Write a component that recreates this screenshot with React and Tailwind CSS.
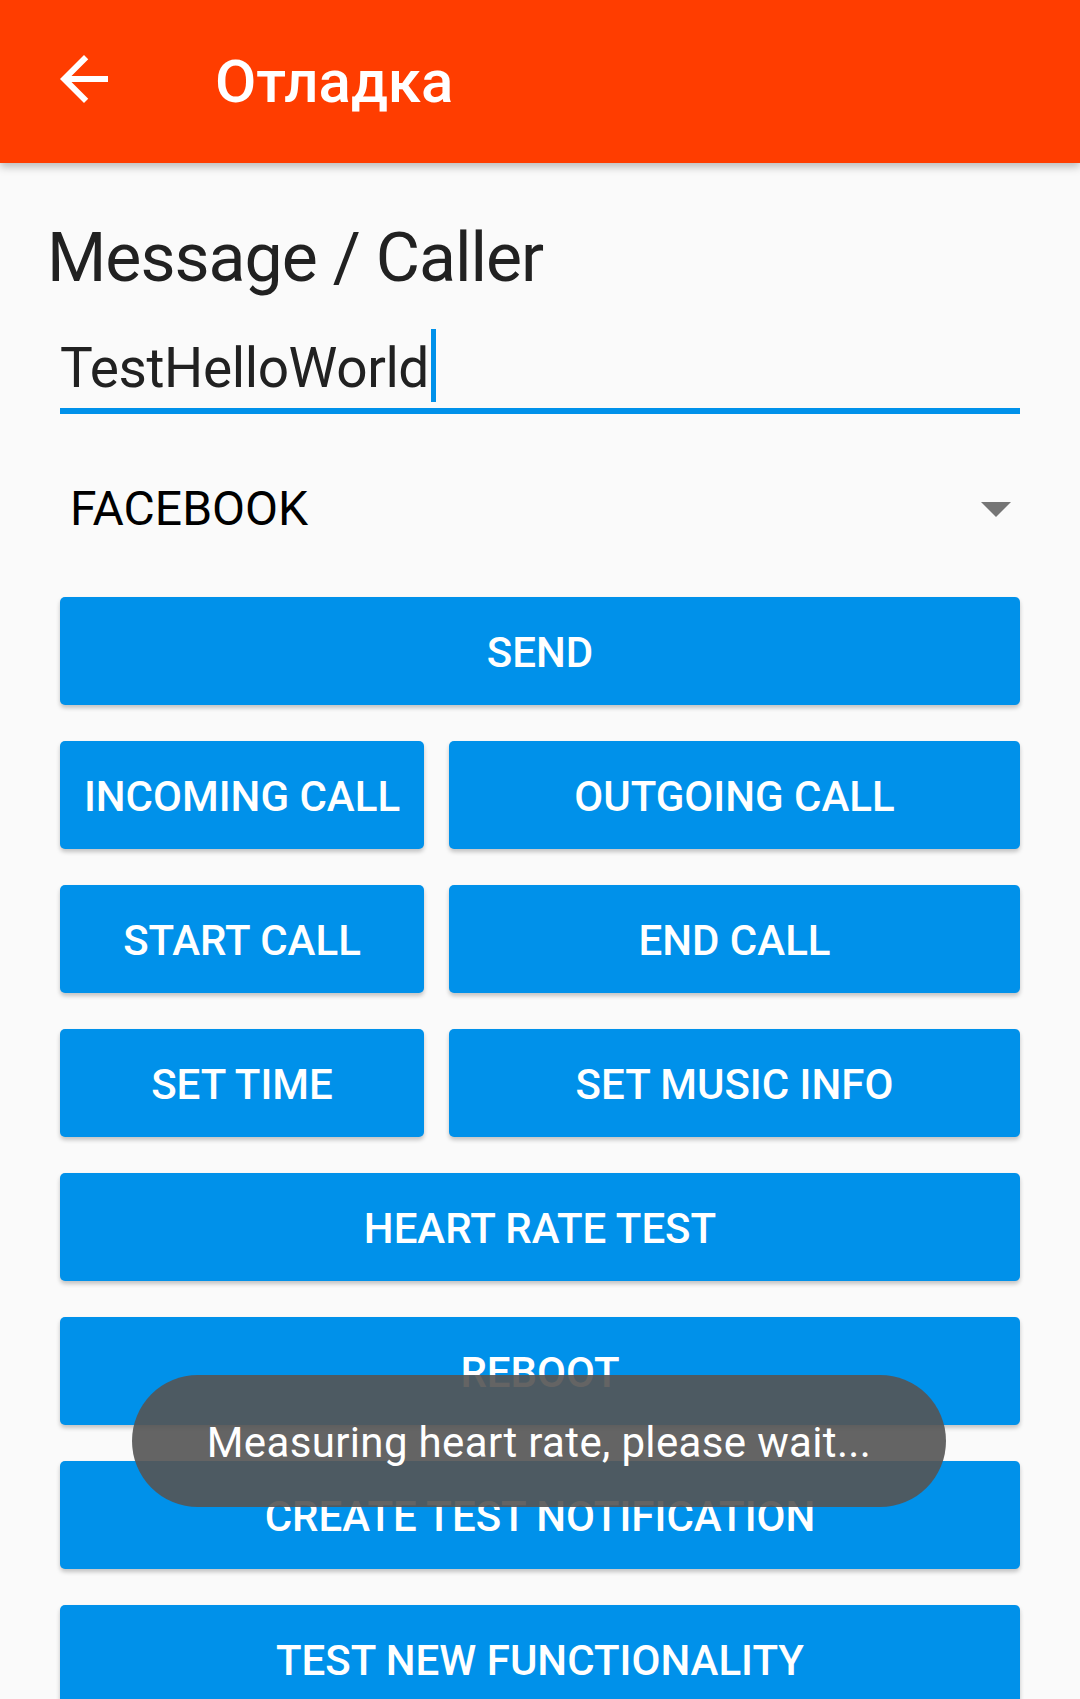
const Btn = ({ label, className = "" }) => (
  <div
    className={
      "h-[108px] pt-[4px] rounded-[5px] bg-[#0091EA] shadow-[0_3px_4px_rgba(0,0,0,0.22)] flex items-center justify-center text-white text-[42px] font-medium leading-none " +
      className
    }
  >
    {label}
  </div>
);

const App = () => {
  return (
    <div className="relative h-[1699px] w-[1080px] overflow-hidden bg-[#FAFAFA] font-[Roboto,sans-serif]">
      <header className="relative z-10 h-[163px] bg-[#FF3D00] flex items-center pl-[48px] shadow-[0_4px_8px_rgba(0,0,0,0.25)]">
        <svg viewBox="0 0 24 24" className="w-[72px] h-[72px] mt-[-5px] fill-white">
          <path d="M20 11H7.83l5.59-5.59L12 4l-8 8 8 8 1.41-1.41L7.83 13H20v-2z" />
        </svg>
        <h1 className="ml-[95px] text-white text-[60px] font-medium leading-none">Отладка</h1>
      </header>

      <main className="px-[60px]">
        <div className="mt-[61px] ml-[-13px] text-[68px] leading-none tracking-[-1px] text-[#212121]">
          Message / Caller
        </div>

        <div className="mt-[38px] pb-[2px] border-b-[6px] border-[#0091EA]">
          <div className="flex h-[76px]">
            <span className="text-[55px] leading-[76px] tracking-[-0.4px] text-[#212121]">TestHelloWorld</span>
            <span className="ml-[2px] w-[5px] h-[73px] mt-[-1px] bg-[#0091EA]" />
          </div>
        </div>

        <div className="mt-[47px] h-[96px] flex items-center justify-between pl-[10px] pr-[9px]">
          <span className="text-[48px] leading-[96px] text-black">FACEBOOK</span>
          <svg viewBox="0 0 30 15" className="w-[30px] h-[15px] fill-[#757575]">
            <path d="M0 0h30L15 15z" />
          </svg>
        </div>

        <div className="mt-[40px] flex flex-col gap-[36px]">
          <Btn label="SEND" />
          <div className="flex gap-[25px]">
            <Btn label="INCOMING CALL" className="w-[364px]" />
            <Btn label="OUTGOING CALL" className="flex-1" />
          </div>
          <div className="flex gap-[25px]">
            <Btn label="START CALL" className="w-[364px]" />
            <Btn label="END CALL" className="flex-1" />
          </div>
          <div className="flex gap-[25px]">
            <Btn label="SET TIME" className="w-[364px]" />
            <Btn label="SET MUSIC INFO" className="flex-1" />
          </div>
          <Btn label="HEART RATE TEST" />
          <Btn label="REBOOT" />
          <Btn label="CREATE TEST NOTIFICATION" />
          <Btn label="TEST NEW FUNCTIONALITY" />
        </div>
      </main>

      <div className="absolute left-[132px] top-[1375px] w-[814px] h-[132px] pt-[4px] rounded-full bg-[rgba(85,85,85,0.91)] flex items-center justify-center text-white text-[42px] leading-none tracking-[0.35px]">
        Measuring heart rate, please wait...
      </div>
    </div>
  );
};

export default App;
